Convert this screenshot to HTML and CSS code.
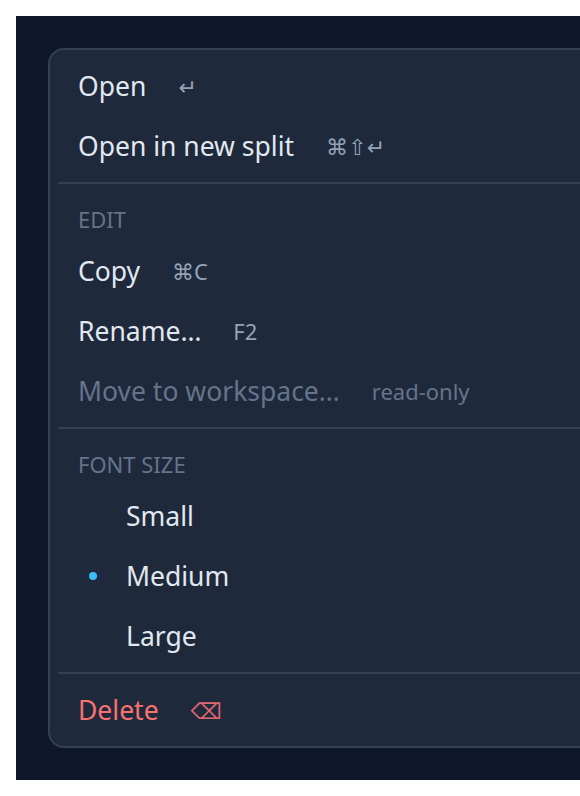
FILE: index.html
```html
<!DOCTYPE html>
<html lang="en">
<head>
  <meta charset="UTF-8">
  <meta name="viewport" content="width=device-width, initial-scale=1.0">
  <title>Context menu</title>
  <link rel="stylesheet" href="styles.css">
</head>
<body>
  <div class="stage">
    <div class="menu" role="menu">
      <div class="menu-item" role="menuitem">
        <span class="menu-label">Open</span>
        <span class="menu-hint">↵</span>
      </div>
      <div class="menu-item" role="menuitem">
        <span class="menu-label">Open in new split</span>
        <span class="menu-hint">⌘⇧↵</span>
      </div>

      <div class="menu-divider"></div>
      <div class="menu-header">EDIT</div>
      <div class="menu-item" role="menuitem">
        <span class="menu-label">Copy</span>
        <span class="menu-hint">⌘C</span>
      </div>
      <div class="menu-item" role="menuitem">
        <span class="menu-label">Rename…</span>
        <span class="menu-hint">F2</span>
      </div>
      <div class="menu-item is-disabled" role="menuitem" aria-disabled="true">
        <span class="menu-label">Move to workspace…</span>
        <span class="menu-hint">read-only</span>
      </div>

      <div class="menu-divider"></div>
      <div class="menu-header">FONT SIZE</div>
      <div class="menu-item menu-radio" role="menuitemradio">
        <span class="radio-mark"></span>
        <span class="menu-label">Small</span>
      </div>
      <div class="menu-item menu-radio is-checked" role="menuitemradio" aria-checked="true">
        <span class="radio-mark"></span>
        <span class="menu-label">Medium</span>
      </div>
      <div class="menu-item menu-radio" role="menuitemradio">
        <span class="radio-mark"></span>
        <span class="menu-label">Large</span>
      </div>

      <div class="menu-divider"></div>
      <div class="menu-item is-danger" role="menuitem">
        <span class="menu-label">Delete</span>
        <span class="menu-hint">⌫</span>
      </div>
    </div>
  </div>
</body>
</html>
```

FILE: styles.css
```css
* {
  margin: 0;
  padding: 0;
  box-sizing: border-box;
}
html, body {
  overflow: hidden;
}
body {
  background: #fff;
  padding: 16px;
  font-family: "Noto Sans", "DejaVu Sans", sans-serif;
}
.stage {
  width: 640px;
  padding: 32px;
  background: #0f172a;
}
.menu {
  width: 600px;
  padding: 6px 0;
  background: #1e293b;
  border: 2px solid #334155;
  border-radius: 16px;
  color: #e2e8f0;
}
.menu-item {
  display: flex;
  align-items: center;
  gap: 32px;
  height: 60px;
  padding: 0 28px;
  font-size: 26.5px;
}
.menu-hint {
  font-size: 22px;
  color: #94a3b8;
}
.menu-divider {
  height: 2px;
  margin: 6px 8px;
  background: #334155;
}
.menu-header {
  padding: 16px 28px 8px;
  line-height: 27px;
  font-size: 22px;
  color: #64748b;
}
.is-disabled .menu-label,
.is-disabled .menu-hint {
  color: #64748b;
}
.menu-radio {
  gap: 18px;
}
.radio-mark {
  display: flex;
  justify-content: center;
  width: 30px;
}
.is-checked .radio-mark::before {
  content: '';
  width: 8px;
  height: 8px;
  border-radius: 50%;
  background: #38bdf8;
}
.is-danger .menu-label {
  color: #f87171;
}
.is-danger .menu-hint {
  color: #e06670;
}
```
